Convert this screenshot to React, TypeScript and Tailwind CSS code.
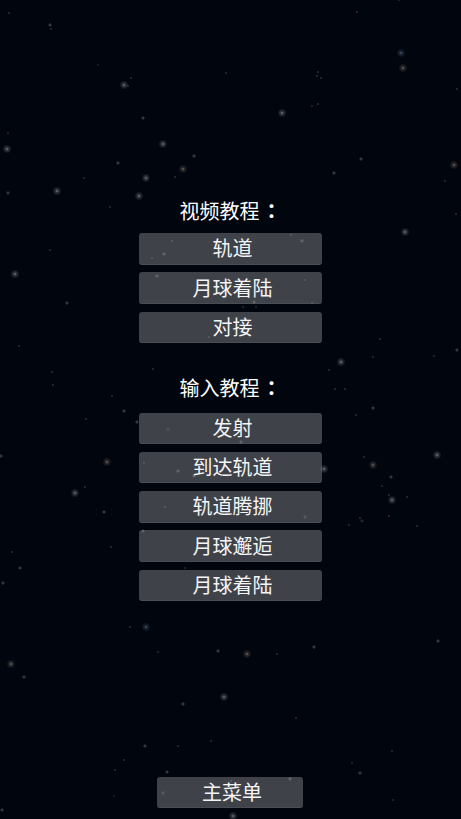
const stars: [number, number, "s" | "m" | "l", ("w" | "y" | "b")?][] = [
  [9, 13, "s"], [50, 25, "m"], [51, 29, "s"], [98, 65, "s", "y"], [226, 73, "s"], [124, 85, "l"], [131, 78, "s"], [128, 86, "s"],
  [143, 118, "m"], [8, 133, "s"], [7, 149, "l"], [163, 144, "l"], [194, 156, "m"], [118, 163, "m"], [183, 169, "l", "y"],
  [146, 178, "l"], [84, 178, "s"], [175, 177, "s"], [57, 191, "l"], [139, 196, "l"], [8, 193, "m"], [110, 207, "s"],
  [50, 250, "s"], [15, 274, "l"], [67, 303, "m"], [19, 346, "s"], [52, 372, "s"], [53, 385, "s"], [112, 396, "s"],
  [124, 411, "m"], [86, 419, "s"], [137, 422, "m"], [1, 456, "m"], [107, 462, "l", "y"], [85, 487, "s"], [75, 493, "l"],
  [104, 512, "m"], [111, 547, "s"], [12, 552, "s"], [20, 568, "m"], [3, 583, "m"],
  [130, 627, "s"], [146, 627, "l", "b"], [158, 652, "s"], [218, 651, "m"], [11, 664, "l", "y"], [24, 677, "m"], [183, 704, "m"],
  [224, 697, "l"], [178, 746, "s"], [145, 746, "m"], [211, 741, "s"], [124, 760, "s"], [115, 770, "s"], [167, 772, "m"],
  [114, 796, "s", "y"], [2, 810, "m"], [163, 793, "m", "y"],
  [399, 0, "s"], [357, 12, "s"], [401, 53, "l", "b"], [403, 68, "l", "y"], [457, 89, "s"], [318, 72, "s"], [317, 76, "s"],
  [321, 78, "s"], [318, 104, "s"], [312, 106, "s", "y"], [282, 113, "l"], [361, 159, "m"], [334, 173, "m"], [454, 165, "l", "y"],
  [445, 181, "s"], [456, 214, "s"], [405, 232, "l"], [380, 339, "s"], [457, 350, "m"], [341, 362, "l"], [373, 357, "s"],
  [434, 356, "s"], [329, 370, "s"], [335, 389, "s"], [345, 389, "s"], [373, 408, "m"], [356, 415, "s"], [437, 455, "l"],
  [364, 457, "s"], [373, 465, "l", "y"], [324, 469, "l"], [391, 477, "m"], [382, 486, "s"], [389, 495, "s"], [392, 500, "l"],
  [407, 497, "s"], [389, 516, "s"], [360, 518, "s"], [362, 521, "m", "b"], [349, 525, "s"], [417, 526, "s"],
  [172, 241, "s"], [164, 254, "m"], [152, 258, "s"], [291, 235, "s"], [302, 241, "m"], [157, 276, "m"], [305, 280, "s"],
  [312, 303, "s"], [254, 302, "m"], [243, 307, "s"], [256, 307, "s"], [209, 337, "s"], [153, 369, "s"], [168, 429, "m", "b"],
  [241, 442, "m"], [144, 463, "s"], [178, 471, "m"], [194, 476, "m"], [165, 507, "s"], [305, 517, "m", "y"], [143, 531, "m"],
  [185, 568, "s"], [231, 781, "s"], [290, 779, "m"], [233, 816, "l"], [247, 654, "l", "y"], [277, 654, "s"], [314, 647, "m"],
  [438, 641, "m"], [296, 718, "s"], [392, 751, "s"], [352, 763, "s"], [360, 773, "m"], [393, 800, "s"],
];

const radius = { s: 1.2, m: 2.2, l: 4.5 };

const Starfield = () => (
  <svg className="absolute inset-0 pointer-events-none" width="461" height="819" viewBox="0 0 461 819">
    <defs>
      <radialGradient id="star-w">
        <stop offset="0" stopColor="#dfe1e6" stopOpacity="0.75" />
        <stop offset="0.22" stopColor="#c0c3ca" stopOpacity="0.3" />
        <stop offset="1" stopColor="#c0c3ca" stopOpacity="0" />
      </radialGradient>
      <radialGradient id="star-y">
        <stop offset="0" stopColor="#ddd2c0" stopOpacity="0.75" />
        <stop offset="0.22" stopColor="#a8998a" stopOpacity="0.3" />
        <stop offset="1" stopColor="#a8998a" stopOpacity="0" />
      </radialGradient>
      <radialGradient id="star-b">
        <stop offset="0" stopColor="#a8bcd8" stopOpacity="0.7" />
        <stop offset="0.22" stopColor="#6c86a8" stopOpacity="0.3" />
        <stop offset="1" stopColor="#6c86a8" stopOpacity="0" />
      </radialGradient>
    </defs>
    {stars.map(([x, y, size, tint], i) => (
      <circle key={i} cx={x} cy={y} r={radius[size]} fill={`url(#star-${tint ?? "w"})`} />
    ))}
  </svg>
);

const MenuButton = ({ label, wide = true }: { label: string; wide?: boolean }) => (
  <button
    className={`${wide ? "w-[183px]" : "w-[146px]"} h-[31.5px] shrink-0 flex items-center justify-center rounded-[3px] bg-[#3f4249] border-b border-[#4a4d54] pl-[4px] text-[20px] leading-none text-[#f4f4f5]`}
  >
    {label}
  </button>
);

const Heading = ({ children }: { children: string }) => (
  <h2 className="h-[24px] flex items-center justify-center text-[20px] leading-none font-normal text-white">
    {children}
    <span className="ml-[2px] font-bold font-['Noto_Sans_CJK_TC',sans-serif]">：</span>
  </h2>
);

export default function App() {
  return (
    <div className="relative w-[461px] h-[819px] overflow-hidden bg-[#01050e] font-['Noto_Sans_CJK_SC','Liberation_Sans',sans-serif] flex flex-col items-center pt-[199px] pb-[11px]">
      <div className="flex flex-col items-center">
        <Heading>视频教程</Heading>
        <div className="mt-[10px] flex flex-col gap-[7.75px]">
          <MenuButton label="轨道" />
          <MenuButton label="月球着陆" />
          <MenuButton label="对接" />
        </div>
      </div>
      <div className="mt-[32.5px] flex flex-col items-center">
        <Heading>输入教程</Heading>
        <div className="mt-[13px] flex flex-col gap-[7.75px]">
          <MenuButton label="发射" />
          <MenuButton label="到达轨道" />
          <MenuButton label="轨道腾挪" />
          <MenuButton label="月球邂逅" />
          <MenuButton label="月球着陆" />
        </div>
      </div>
      <div className="mt-auto pr-[1px]">
        <MenuButton label="主菜单" wide={false} />
      </div>
      <Starfield />
    </div>
  );
}
